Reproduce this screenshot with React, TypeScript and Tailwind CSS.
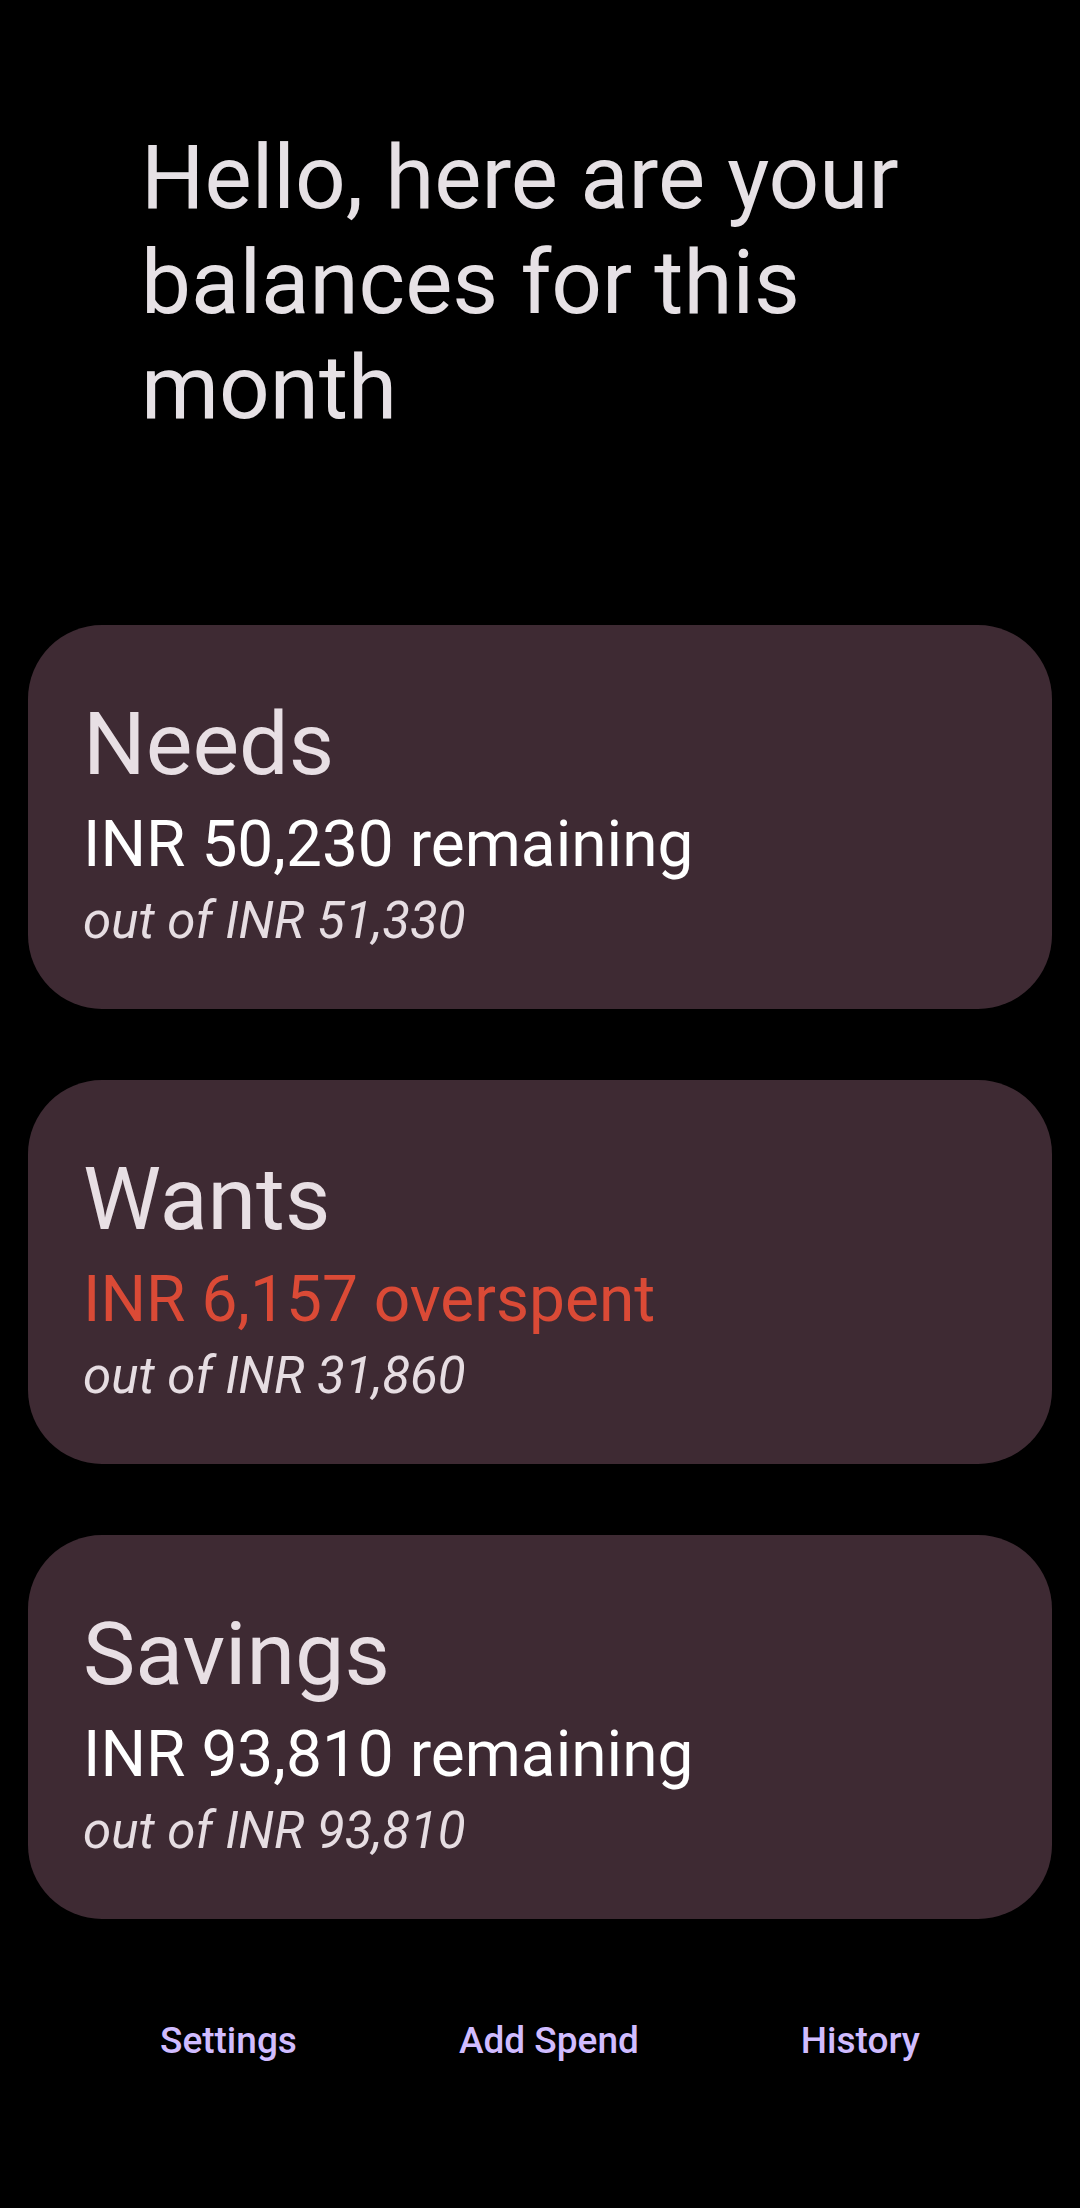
const font = { fontFamily: "Roboto, 'Noto Sans', sans-serif" };

interface Bucket {
  name: string;
  amount: string;
  total: string;
  over?: boolean;
}

const buckets: Bucket[] = [
  { name: "Needs", amount: "INR 50,230 remaining", total: "out of INR 51,330" },
  { name: "Wants", amount: "INR 6,157 overspent", total: "out of INR 31,860", over: true },
  { name: "Savings", amount: "INR 93,810 remaining", total: "out of INR 93,810" },
];

function BucketCard({ bucket }: { bucket: Bucket }) {
  return (
    <div className="flex h-[384px] flex-col rounded-[74px] bg-[#3e2a33] pl-[55px] pt-[66px]">
      <h2 className="text-[88px] leading-[105px] text-[#e8dfe4]">{bucket.name}</h2>
      <p
        className={
          bucket.over
            ? "mt-[12px] text-[64px] leading-[74px] text-[#da4a36]"
            : "mt-[12px] text-[64px] leading-[74px] text-white"
        }
      >
        {bucket.amount}
      </p>
      <p className="mt-[10px] text-[51px] italic leading-[58px] text-[#e6dde2]">{bucket.total}</p>
    </div>
  );
}

export default function App() {
  return (
    <div className="min-h-[2208px] w-[1080px] bg-black" style={font}>
      <h1 className="ml-[141px] w-[800px] pt-[125px] text-[89px] leading-[105px] text-[#e6e1e5]">
        Hello, here are your balances for this month
      </h1>

      <div className="mx-[28px] mt-[185px] flex flex-col gap-[71px]">
        {buckets.map((b) => (
          <BucketCard key={b.name} bucket={b} />
        ))}
      </div>

      <nav className="mt-[100px] flex items-center justify-between px-[160px] text-[37px] font-medium leading-[43px] text-[#d0bcff]">
        <button>Settings</button>
        <button>Add Spend</button>
        <button>History</button>
      </nav>
    </div>
  );
}
